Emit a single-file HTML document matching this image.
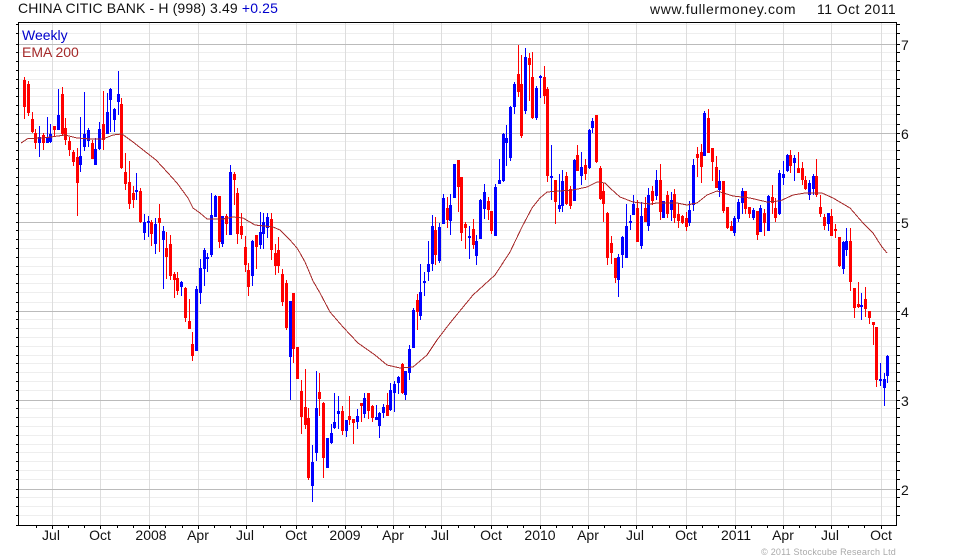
<!DOCTYPE html>
<html>
<head>
<meta charset="utf-8">
<style>
html,body{margin:0;padding:0;background:#fff;width:980px;height:560px;overflow:hidden}
svg{display:block}
text{font-family:"Liberation Sans",Arial,sans-serif;font-size:14px;fill:#111}
.c{shape-rendering:crispEdges;fill:none}
</style>
</head>
<body>
<svg width="980" height="560" viewBox="0 0 980 560" xmlns="http://www.w3.org/2000/svg">
<rect width="980" height="560" fill="#fff"/>
<path class="c" stroke="#eeeeee" stroke-width="1" d="M19 24.5H896M19 33.5H896M19 52.5H896M19 61.5H896M19 70.5H896M19 79.5H896M19 88.5H896M19 96.5H896M19 105.5H896M19 114.5H896M19 124.5H896M19 141.5H896M19 150.5H896M19 159.5H896M19 168.5H896M19 177.5H896M19 185.5H896M19 194.5H896M19 203.5H896M19 213.5H896M19 230.5H896M19 239.5H896M19 248.5H896M19 257.5H896M19 266.5H896M19 274.5H896M19 283.5H896M19 292.5H896M19 302.5H896M19 319.5H896M19 328.5H896M19 337.5H896M19 346.5H896M19 355.5H896M19 363.5H896M19 372.5H896M19 381.5H896M19 390.5H896M19 408.5H896M19 417.5H896M19 426.5H896M19 435.5H896M19 444.5H896M19 452.5H896M19 461.5H896M19 470.5H896M19 479.5H896M19 497.5H896M19 506.5H896M19 515.5H896"/>
<path class="c" stroke="#dddddd" stroke-width="1" d="M52.5 23V525M100.5 23V525M149.5 23V525M198.5 23V525M246.5 23V525M296.5 23V525M345.5 23V525M393.5 23V525M441.5 23V525M491.5 23V525M540.5 23V525M588.5 23V525M636.5 23V525M686.5 23V525M735.5 23V525M783.5 23V525M831.5 23V525M881.5 23V525"/>
<path class="c" stroke="#bbbbbb" stroke-width="1" d="M19 44.5H896M19 133.5H896M19 222.5H896M19 311.5H896M19 400.5H896M19 489.5H896"/>

<path class="c" stroke="#ff0000" stroke-width="1" d="M24.5 77V119M28.5 81V116M32.5 112V133M35.5 129V149M43.5 133V150M54.5 126V137M62.5 87V135M65.5 118V145M69.5 137V156M73.5 150V166M77.5 148V216M92.5 140V159M103.5 91V150M121.5 98V169M125.5 153V190M129.5 161V209M133.5 186V208M140.5 188V223M151.5 220V246M159.5 204V252M166.5 232V279M170.5 235V280M174.5 272V298M177.5 272V295M185.5 287V322M189.5 299V329M192.5 332V361M219.5 196V248M226.5 214V235M234.5 172V205M237.5 188V244M241.5 213V239M245.5 236V272M248.5 263V296M256.5 235V269M271.5 213V260M275.5 244V275M278.5 237V273M282.5 269V306M286.5 280V330M293.5 293V363M297.5 347V379M301.5 380V434M305.5 369V429M308.5 408V480M319.5 373V416M323.5 402V478M342.5 406V435M349.5 396V425M353.5 419V444M361.5 403V422M368.5 393V419M372.5 405V422M387.5 393V416M402.5 363V394M417.5 294V330M435.5 217V265M447.5 197V228M458.5 160V212M461.5 177V241M465.5 222V249M473.5 219V249M488.5 197V220M491.5 211V234M518.5 45V97M521.5 55V138M529.5 53V101M532.5 52V119M544.5 66V104M547.5 87V182M555.5 180V224M566.5 172V205M570.5 186V209M577.5 145V171M585.5 159V180M596.5 115V163M600.5 166V200M603.5 183V222M607.5 212V265M611.5 236V264M615.5 258V283M637.5 200V242M645.5 197V222M652.5 186V205M660.5 164V220M667.5 191V218M674.5 189V223M678.5 203V228M682.5 215V224M686.5 212V231M697.5 147V177M701.5 144V183M708.5 109V153M712.5 148V181M716.5 156V188M723.5 181V213M727.5 207V229M731.5 221V231M745.5 191V214M749.5 207V218M757.5 211V240M764.5 209V236M772.5 185V214M775.5 198V222M790.5 150V173M798.5 152V173M802.5 162V185M805.5 176V190M816.5 159V197M820.5 195V217M824.5 214V230M831.5 209V236M835.5 224V238M839.5 237V267M850.5 228V291M854.5 288V318M858.5 282V308M865.5 287V317M869.5 311V324M873.5 322V345M876.5 327V387"/>
<path class="c" stroke="#ff0000" stroke-width="3" d="M24.5 80V107M28.5 84V113M32.5 119V132M35.5 133V143M43.5 135V143M54.5 126V130M62.5 94V134M65.5 128V140M69.5 141V150M73.5 152V162M77.5 157V183M92.5 143V159M103.5 124V140M121.5 104V168M125.5 172V184M129.5 182V204M133.5 193V200M140.5 191V222M151.5 222V234M159.5 218V223M166.5 248V257M170.5 244V276M174.5 274V280M177.5 278V291M185.5 288V318M189.5 321V329M192.5 344V356M219.5 196V242M226.5 216V224M234.5 174V180M237.5 193V234M241.5 226V235M245.5 247V265M248.5 270V287M256.5 235V247M271.5 219V250M275.5 253V266M278.5 250V266M282.5 274V302M286.5 283V328M293.5 293V349M297.5 347V379M301.5 391V417M305.5 407V425M308.5 418V478M319.5 392V399M323.5 403V458M342.5 411V431M349.5 416V420M353.5 419V423M361.5 403V406M368.5 393V411M372.5 406V418M387.5 405V416M402.5 364V393M417.5 300V312M435.5 230V255M447.5 208V220M458.5 160V187M461.5 177V233M465.5 224V228M473.5 229V245M488.5 201V210M491.5 211V231M518.5 74V92M521.5 84V136M529.5 58V65M532.5 77V118M544.5 77V96M547.5 89V176M555.5 180V202M566.5 176V204M570.5 189V206M577.5 155V171M585.5 165V174M596.5 115V162M600.5 168V199M603.5 191V204M607.5 213V258M611.5 243V253M615.5 258V278M637.5 208V242M645.5 208V222M652.5 191V201M660.5 180V212M667.5 195V214M674.5 194V218M678.5 214V221M682.5 216V223M686.5 218V227M697.5 154V158M701.5 152V167M708.5 118V153M712.5 148V162M716.5 167V188M723.5 181V211M727.5 207V228M731.5 226V231M745.5 191V209M749.5 207V214M757.5 211V235M764.5 213V223M772.5 197V203M775.5 208V218M790.5 155V166M798.5 168V173M802.5 168V180M805.5 180V189M816.5 176V195M820.5 207V214M824.5 217V226M831.5 216V236M835.5 229V231M839.5 237V266M850.5 241V282M854.5 288V308M858.5 304V307M865.5 299V309M869.5 311V318M873.5 322V325M876.5 327V380"/>
<path class="c" stroke="#0000ff" stroke-width="1" d="M39.5 126V157M47.5 117V143M50.5 124V143M58.5 89V130M80.5 117V172M84.5 92V151M88.5 128V147M95.5 138V165M99.5 122V150M107.5 93V134M110.5 88V132M114.5 108V132M118.5 71V115M136.5 173V200M144.5 214V240M148.5 216V237M155.5 218V254M163.5 226V289M181.5 281V296M196.5 286V351M200.5 259V304M204.5 248V286M207.5 253V272M211.5 193V257M215.5 195V217M222.5 216V247M230.5 165V235M252.5 240V286M260.5 212V249M263.5 213V249M267.5 213V238M290.5 301V400M312.5 445V502M316.5 371V461M327.5 438V468M331.5 424V444M334.5 393V429M338.5 396V429M346.5 420V437M357.5 409V429M364.5 393V418M376.5 405V420M379.5 412V438M383.5 404V418M390.5 383V411M394.5 381V412M398.5 376V394M405.5 371V400M409.5 345V380M413.5 308V348M420.5 264V320M424.5 272V296M428.5 241V281M432.5 215V271M439.5 223V263M443.5 194V224M450.5 194V235M454.5 164V198M469.5 226V259M476.5 235V265M480.5 199V239M484.5 184V219M495.5 184V236M499.5 159V184M503.5 133V182M506.5 125V166M510.5 106V161M514.5 82V114M525.5 48V114M536.5 86V120M540.5 75V98M551.5 145V200M559.5 174V212M562.5 170V212M574.5 159V201M581.5 152V185M589.5 129V169M592.5 118V133M618.5 254V297M622.5 236V268M626.5 204V258M630.5 215V230M633.5 195V215M641.5 202V249M648.5 188V231M656.5 170V200M663.5 201V218M671.5 192V221M689.5 201V226M693.5 159V211M704.5 111V156M719.5 170V197M734.5 216V236M738.5 199V222M742.5 188V214M753.5 208V220M760.5 205V232M768.5 195V231M779.5 170V215M783.5 161V185M787.5 154V172M794.5 155V181M809.5 180V200M813.5 174V195M828.5 213V231M843.5 241V274M846.5 228V256M861.5 293V320M880.5 363V386M884.5 373V406M887.5 355V383"/>
<path class="c" stroke="#0000ff" stroke-width="3" d="M39.5 137V143M47.5 137V143M50.5 134V142M58.5 115V130M80.5 156V165M84.5 134V147M88.5 130V141M95.5 149V165M99.5 129V149M107.5 112V134M110.5 89V100M114.5 109V120M118.5 94V102M136.5 190V192M144.5 222V233M148.5 221V223M155.5 224V244M163.5 231V240M181.5 282V287M196.5 289V351M200.5 268V293M204.5 250V269M207.5 257V259M211.5 215V255M215.5 196V217M222.5 216V244M230.5 172V235M252.5 241V276M260.5 232V245M263.5 222V234M267.5 217V228M290.5 301V357M312.5 462V486M316.5 408V453M327.5 438V468M331.5 433V443M334.5 422V428M338.5 411V414M346.5 420V431M357.5 416V422M364.5 398V414M376.5 417V420M379.5 413V426M383.5 407V413M390.5 390V410M394.5 384V393M398.5 377V383M405.5 371V395M409.5 349V373M413.5 310V348M420.5 292V316M424.5 281V283M428.5 264V272M432.5 226V264M439.5 227V261M443.5 198V224M450.5 205V221M454.5 164V198M469.5 236V238M476.5 241V256M480.5 200V239M484.5 192V209M495.5 187V236M499.5 180V184M503.5 134V181M506.5 138V143M510.5 107V158M514.5 84V107M525.5 57V111M536.5 88V118M540.5 76V78M551.5 176V178M559.5 205V209M562.5 181V206M574.5 160V201M581.5 167V176M589.5 130V168M592.5 121V128M618.5 257V280M622.5 237V255M626.5 226V258M630.5 221V223M633.5 204V215M641.5 216V246M648.5 195V226M656.5 180V196M663.5 201V218M671.5 200V210M689.5 210V223M693.5 165V205M704.5 113V156M719.5 181V190M734.5 218V233M738.5 202V219M742.5 191V203M753.5 210V218M760.5 208V232M768.5 196V231M779.5 173V214M783.5 174V178M787.5 155V171M794.5 158V163M809.5 183V195M813.5 176V189M828.5 213V224M843.5 242V269M846.5 241V250M861.5 305V307M880.5 379V381M884.5 379V388M887.5 356V376"/>

<polyline class="c" stroke="#a52a2a" stroke-width="1" points="21,143 28,138.5 43,138 58,136 65,135 77,138 90,139 103,139 113,135 122,134 133,142 147,153 156,160 168,173 177,183 188,198 193,208 200,213 207,219 223,219 233,217 243,218 255,225 273,227 280,230 290,240 297,248 300,253 305,262 308,269 313,281 320,293 330,312 343,327 358,343 375,355 387,365 400,368 413,367 427,355 437,340 450,323 473,295 495,275 510,252 522,227 532,208 540,198 547,192 573,190 587,187 597,182 605,183 610,188 620,197 633,202 650,204 657,203 677,203 687,205 697,203 707,195 717,191 733,196 750,198 767,202 780,201 793,195 805,193 822,193 833,198 850,208 863,223 873,233 882,247 887,253"/>

<rect class="c" x="18.5" y="22.5" width="878" height="503" stroke="#000" stroke-width="1"/>
<path class="c" stroke="#000" stroke-width="1" d="M16 24.5H18M16 33.5H18M16 44.5H18M16 52.5H18M16 61.5H18M16 70.5H18M16 79.5H18M16 88.5H18M16 96.5H18M16 105.5H18M16 114.5H18M16 124.5H18M16 133.5H18M16 141.5H18M16 150.5H18M16 159.5H18M16 168.5H18M16 177.5H18M16 185.5H18M16 194.5H18M16 203.5H18M16 213.5H18M16 222.5H18M16 230.5H18M16 239.5H18M16 248.5H18M16 257.5H18M16 266.5H18M16 274.5H18M16 283.5H18M16 292.5H18M16 302.5H18M16 311.5H18M16 319.5H18M16 328.5H18M16 337.5H18M16 346.5H18M16 355.5H18M16 363.5H18M16 372.5H18M16 381.5H18M16 390.5H18M16 400.5H18M16 408.5H18M16 417.5H18M16 426.5H18M16 435.5H18M16 444.5H18M16 452.5H18M16 461.5H18M16 470.5H18M16 479.5H18M16 489.5H18M16 497.5H18M16 506.5H18M16 515.5H18M16 525.5H18"/>
<path class="c" stroke="#000" stroke-width="1" d="M897 24.5H900M897 33.5H900M897 44.5H900M897 52.5H900M897 61.5H900M897 70.5H900M897 79.5H900M897 88.5H900M897 96.5H900M897 105.5H900M897 114.5H900M897 124.5H900M897 133.5H900M897 141.5H900M897 150.5H900M897 159.5H900M897 168.5H900M897 177.5H900M897 185.5H900M897 194.5H900M897 203.5H900M897 213.5H900M897 222.5H900M897 230.5H900M897 239.5H900M897 248.5H900M897 257.5H900M897 266.5H900M897 274.5H900M897 283.5H900M897 292.5H900M897 302.5H900M897 311.5H900M897 319.5H900M897 328.5H900M897 337.5H900M897 346.5H900M897 355.5H900M897 363.5H900M897 372.5H900M897 381.5H900M897 390.5H900M897 400.5H900M897 408.5H900M897 417.5H900M897 426.5H900M897 435.5H900M897 444.5H900M897 452.5H900M897 461.5H900M897 470.5H900M897 479.5H900M897 489.5H900M897 497.5H900M897 506.5H900M897 515.5H900"/>
<path class="c" stroke="#000" stroke-width="1" d="M52.5 526V529M100.5 526V529M149.5 526V529M198.5 526V529M246.5 526V529M296.5 526V529M345.5 526V529M393.5 526V529M441.5 526V529M491.5 526V529M540.5 526V529M588.5 526V529M636.5 526V529M686.5 526V529M735.5 526V529M783.5 526V529M831.5 526V529M881.5 526V529M36.5 526V528M68.5 526V528M84.5 526V528M117.5 526V528M133.5 526V528M165.5 526V528M182.5 526V528M214.5 526V528M230.5 526V528M263.5 526V528M280.5 526V528M312.5 526V528M328.5 526V528M361.5 526V528M377.5 526V528M409.5 526V528M425.5 526V528M458.5 526V528M474.5 526V528M507.5 526V528M523.5 526V528M556.5 526V528M572.5 526V528M604.5 526V528M620.5 526V528M652.5 526V528M669.5 526V528M702.5 526V528M718.5 526V528M751.5 526V528M767.5 526V528M799.5 526V528M815.5 526V528M848.5 526V528M864.5 526V528"/>

<text x="18" y="13" style="letter-spacing:.14px">CHINA CITIC BANK - H (998) 3.49 <tspan fill="#0000cc">+0.25</tspan></text>
<text x="650" y="14" style="letter-spacing:.58px">www.fullermoney.com</text>
<text x="817" y="14" style="letter-spacing:.45px">11 Oct 2011</text>
<text x="22" y="40" style="fill:#0000cc">Weekly</text>
<text x="22" y="57" style="fill:#a52a2a">EMA 200</text>

<text x="901" y="50">7</text>
<text x="901" y="139">6</text>
<text x="901" y="228">5</text>
<text x="901" y="317">4</text>
<text x="901" y="406">3</text>
<text x="901" y="495">2</text>

<g text-anchor="middle">
<text x="51" y="540">Jul</text>
<text x="100" y="540">Oct</text>
<text x="151" y="540">2008</text>
<text x="198" y="540">Apr</text>
<text x="245" y="540">Jul</text>
<text x="296" y="540">Oct</text>
<text x="345" y="540">2009</text>
<text x="393" y="540">Apr</text>
<text x="440" y="540">Jul</text>
<text x="491" y="540">Oct</text>
<text x="540" y="540">2010</text>
<text x="588" y="540">Apr</text>
<text x="635" y="540">Jul</text>
<text x="686" y="540">Oct</text>
<text x="736" y="540">2011</text>
<text x="783" y="540">Apr</text>
<text x="830" y="540">Jul</text>
<text x="881" y="540">Oct</text>
</g>
<text x="896" y="555" text-anchor="end" style="font-size:9px;fill:#aaaaaa;letter-spacing:.2px">© 2011 Stockcube Research Ltd</text>
</svg>
</body>
</html>
